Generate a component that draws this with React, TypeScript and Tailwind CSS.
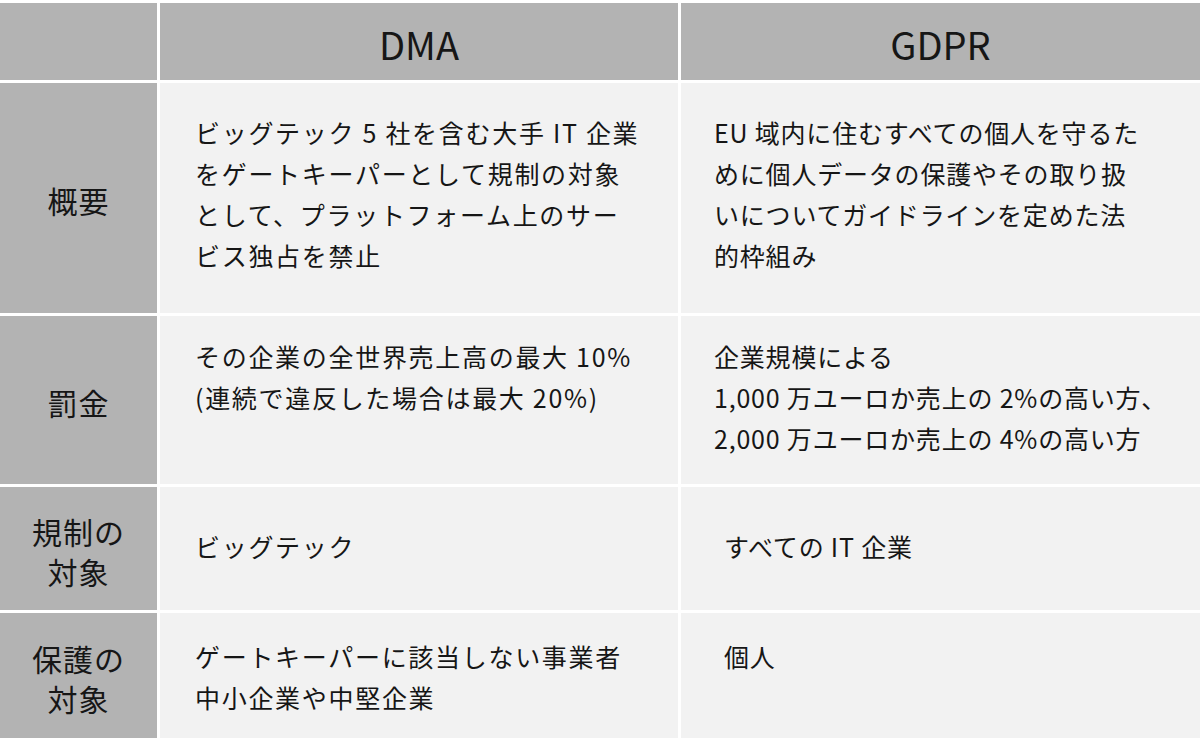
import React from "react";

const font = {
  fontFamily: '"Noto Sans CJK JP", "Noto Sans", sans-serif',
};

type Row = {
  label: string[];
  dma: string[];
  gdpr: string[];
  height: string;
  pad: string;
  gdprIndent?: boolean;
};

const rows: Row[] = [
  {
    label: ["概要"],
    dma: [
      "ビッグテック 5 社を含む大手 IT 企業",
      "をゲートキーパーとして規制の対象",
      "として、プラットフォーム上のサー",
      "ビス独占を禁止",
    ],
    gdpr: [
      "EU 域内に住むすべての個人を守るた",
      "めに個人データの保護やその取り扱",
      "いについてガイドラインを定めた法",
      "的枠組み",
    ],
    height: "h-[230px]",
    pad: "pt-[29px]",
  },
  {
    label: ["罰金"],
    dma: ["その企業の全世界売上高の最大 10%", "(連続で違反した場合は最大 20%)"],
    gdpr: [
      "企業規模による",
      "1,000 万ユーロか売上の 2%の高い方、",
      "2,000 万ユーロか売上の 4%の高い方",
    ],
    height: "h-[168px]",
    pad: "pt-[20px]",
  },
  {
    label: ["規制の", "対象"],
    dma: ["ビッグテック"],
    gdpr: ["すべての IT 企業"],
    height: "h-[123px]",
    pad: "pt-[39px]",
    gdprIndent: true,
  },
  {
    label: ["保護の", "対象"],
    dma: ["ゲートキーパーに該当しない事業者", "中小企業や中堅企業"],
    gdpr: ["個人"],
    height: "h-[125px]",
    pad: "pt-[23px]",
    gdprIndent: true,
  },
];

const Lines = ({ lines }: { lines: string[] }) => (
  <>
    {lines.map((l, i) => (
      <div key={i} className="whitespace-nowrap">
        {l}
      </div>
    ))}
  </>
);

export default function App() {
  return (
    <div
      style={font}
      className="w-[1200px] h-[742px] bg-white pt-[3px] text-[#161616] overflow-hidden"
    >
      <div className="grid grid-cols-[157px_518px_519px] gap-[3px]">
        {/* header */}
        <div className="h-[77px] bg-[#b3b3b3]" />
        <div className="h-[77px] bg-[#b3b3b3] flex items-center justify-center text-[38px] pt-[4px]">
          DMA
        </div>
        <div className="h-[77px] bg-[#b3b3b3] flex items-center justify-center text-[38px] pt-[4px]">
          GDPR
        </div>

        {rows.map((r, i) => (
          <React.Fragment key={i}>
            <div
              className={`${r.height} bg-[#b3b3b3] flex flex-col items-center justify-center pt-[4px] text-[30px] leading-[40px] tracking-[1px]`}
            >
              <Lines lines={r.label} />
            </div>
            <div
              className={`${r.height} bg-[#f2f2f2] ${r.pad} pl-[35px] text-[25px] leading-[41px] tracking-[1.7px]`}
            >
              <Lines lines={r.dma} />
            </div>
            <div
              className={`${r.height} bg-[#f2f2f2] ${r.pad} ${
                r.gdprIndent ? "pl-[43px]" : "pl-[33px]"
              } text-[25px] leading-[41px] tracking-[0.8px]`}
            >
              <Lines lines={r.gdpr} />
            </div>
          </React.Fragment>
        ))}
      </div>
    </div>
  );
}
